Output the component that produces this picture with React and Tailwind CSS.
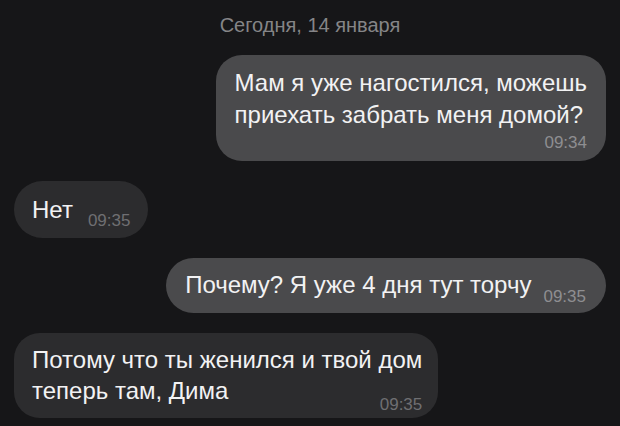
const font = { fontFamily: '"Liberation Sans", Arial, sans-serif' };

const Time = ({ children, dim, className = "" }) => (
  <span
    className={`text-[17px] leading-[18px] ${dim ? "text-[#6f6f72]" : "text-[#8e8e91]"} ${className}`}
  >
    {children}
  </span>
);

export default function App() {
  return (
    <div
      className="flex h-[426px] w-[620px] flex-col overflow-hidden bg-[#161618] px-[14px] pt-[13px] text-[#f2f2f3]"
      style={font}
    >
      <div className="text-center text-[20px] leading-[24px] text-[#858587]">
        Сегодня, 14 января
      </div>

      <div className="mt-[18px] flex flex-col gap-5">
        {/* outgoing, two lines */}
        <div className="flex justify-end">
          <div className="flex flex-col rounded-[26px] bg-[#4a4a4c] px-[19px] pb-[9px] pt-3">
            <p className="whitespace-nowrap text-[24px] leading-[32px]">
              Мам я уже нагостился, можешь
              <br />
              приехать забрать меня домой?
            </p>
            <Time className="mt-[3px] self-end">09:34</Time>
          </div>
        </div>

        {/* incoming, short */}
        <div className="flex justify-start">
          <div className="flex items-end gap-[15px] rounded-full bg-[#2c2c2e] px-[18px] pb-[12px] pt-[13px]">
            <span className="text-[24px] leading-[32px]">Нет</span>
            <Time dim className="-mb-[4px]">09:35</Time>
          </div>
        </div>

        {/* outgoing, one line */}
        <div className="flex justify-end">
          <div className="flex items-end gap-3 rounded-full bg-[#4a4a4c] pb-[12px] pl-[19px] pr-[20px] pt-[11px]">
            <span className="whitespace-nowrap text-[24px] leading-[32px]">
              Почему? Я уже 4 дня тут торчу
            </span>
            <Time className="-mb-[5px]">09:35</Time>
          </div>
        </div>

        {/* incoming, two lines */}
        <div className="flex justify-start">
          <div className="flex flex-col rounded-[26px] bg-[#2c2c2e] pb-[12px] pl-[18px] pr-[16px] pt-[11px]">
            <p className="whitespace-nowrap text-[24px] leading-[31px]">
              Потому что ты женился и твой дом
            </p>
            <div className="flex items-end justify-between">
              <span className="text-[24px] leading-[31px]">теперь там, Дима</span>
              <Time dim className="-mb-[8px]">09:35</Time>
            </div>
          </div>
        </div>
      </div>
    </div>
  );
}
